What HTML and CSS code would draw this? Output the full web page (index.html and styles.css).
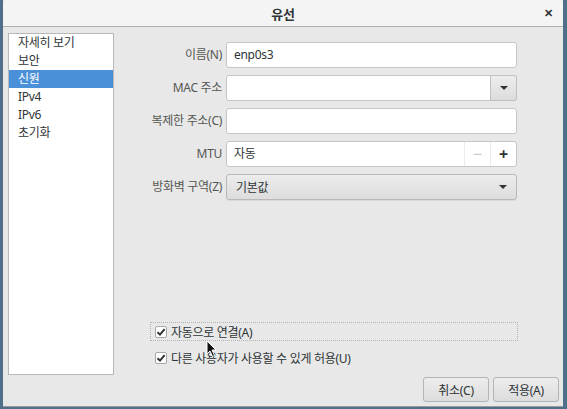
FILE: index.html
```html
<!DOCTYPE html>
<html lang="ko">
<head>
    <meta charset="UTF-8">
    <title>유선</title>
    <link rel="stylesheet" href="styles.css">
</head>
<body>
    <div class="window">
        <div class="titlebar">
            <span class="title">유선</span>
            <span class="close">&#x2715;</span>
        </div>

        <div class="content">
            <!-- page list -->
            <ul class="sidebar">
                <li>자세히 보기</li>
                <li>보안</li>
                <li class="selected">신원</li>
                <li>IPv4</li>
                <li>IPv6</li>
                <li>초기화</li>
            </ul>

            <div class="page">
                <div class="form-grid">
                    <label>이름(N)</label>
                    <div class="entry">enp0s3</div>

                    <label>MAC 주소</label>
                    <div class="entry combo">
                        <span class="entry-text"></span>
                        <span class="combo-btn"><span class="arrow"></span></span>
                    </div>

                    <label>복제한 주소(C)</label>
                    <div class="entry"></div>

                    <label>MTU</label>
                    <div class="entry spin">
                        <span class="entry-text">자동</span>
                        <span class="spin-btn disabled">&minus;</span>
                        <span class="spin-btn">+</span>
                    </div>

                    <label>방화벽 구역(Z)</label>
                    <div class="dropdown">
                        <span>기본값</span>
                        <span class="arrow"></span>
                    </div>
                </div>

                <div class="checks">
                    <div class="check-row focused">
                        <span class="checkbox">
                            <svg width="10" height="10" viewBox="0 0 10 10"><path d="M1.5 5.2 L4 7.6 L8.6 2.2" fill="none" stroke="#2e3436" stroke-width="2"/></svg>
                        </span>
                        자동으로 연결(A)
                    </div>
                    <div class="check-row">
                        <span class="checkbox">
                            <svg width="10" height="10" viewBox="0 0 10 10"><path d="M1.5 5.2 L4 7.6 L8.6 2.2" fill="none" stroke="#2e3436" stroke-width="2"/></svg>
                        </span>
                        다른 사용자가 사용할 수 있게 허용(U)
                    </div>
                    <svg class="cursor" width="12" height="18" viewBox="0 0 12 18">
                        <path d="M1 1 L1 14 L4 11 L6.5 16.5 L8.5 15.5 L6 10 L10 10 Z" fill="#111" stroke="#fff" stroke-width="1"/>
                    </svg>
                </div>
            </div>
        </div>

        <div class="footer">
            <button>취소(C)</button>
            <button>적용(A)</button>
        </div>
    </div>
</body>
</html>
```

FILE: styles.css
```css
body {
    margin: 0;
    width: 567px;
    height: 409px;
    overflow: hidden;
    background: #4f6f8b;
    font-family: "Noto Sans", "Noto Sans CJK KR", sans-serif;
    font-size: 12px;
    letter-spacing: -0.3px;
    color: #2e3436;
}

.window {
    margin-left: 3px;
    width: 560px;
    height: 407px;
    background: #e8e8e8;
    display: flex;
    flex-direction: column;
    box-sizing: border-box;
    border-bottom: 1px solid #9a9a9a;
}

.titlebar {
    height: 26px;
    flex: none;
    background: #f4f4f4;
    border-bottom: 1px solid #b0b0b0;
    border-radius: 4px 4px 0 0;
    display: flex;
    align-items: center;
    justify-content: center;
    position: relative;
}

.title {
    font-weight: bold;
    font-size: 13px;
    color: #2e3436;
}

.close {
    position: absolute;
    right: 10px;
    top: 5px;
    font-size: 11px;
    font-weight: bold;
    color: #2e3436;
}

.content {
    flex: 1;
    display: flex;
    padding: 6px 0 0 5px;
    min-height: 0;
}

.sidebar {
    list-style: none;
    margin: 0;
    padding: 0;
    width: 104px;
    height: 340px;
    background: #fff;
    border: 1px solid #b8b8b8;
    flex: none;
}

.sidebar li {
    height: 18px;
    line-height: 18px;
    padding-left: 9px;
}

.sidebar li.selected {
    background: #4a90d9;
    color: #fff;
}

.page {
    flex: 1;
    display: flex;
    flex-direction: column;
    height: 342px;
    position: relative;
}

.form-grid {
    display: grid;
    grid-template-columns: 108px 291px;
    grid-auto-rows: 26px;
    column-gap: 4px;
    row-gap: 7px;
    padding-top: 9px;
}

.form-grid label {
    text-align: right;
    line-height: 26px;
    color: #555753;
}

.entry {
    background: #fff;
    border: 1px solid #c6c6c6;
    border-radius: 3px;
    box-sizing: border-box;
    line-height: 24px;
    padding-left: 7px;
    display: flex;
}

.entry-text {
    flex: 1;
}

.combo,
.spin {
    padding-right: 0;
}

.combo-btn {
    width: 25px;
    margin: -1px -1px -1px 0;
    border: 1px solid #c0c0c0;
    border-radius: 0 3px 3px 0;
    background: linear-gradient(#ededed, #dcdcdc);
    display: flex;
    align-items: center;
    justify-content: center;
}

.arrow {
    width: 0;
    height: 0;
    border-left: 4px solid transparent;
    border-right: 4px solid transparent;
    border-top: 4px solid #2e3436;
}

.spin-btn {
    width: 25px;
    text-align: center;
    border-left: 1px solid #ececec;
    font-size: 16px;
    font-weight: bold;
    color: #2e3436;
}

.spin-btn.disabled {
    color: #c8c8c8;
    font-weight: normal;
}

.dropdown {
    border: 1px solid #b8b8b8;
    border-radius: 3px;
    background: linear-gradient(#ececec, #dddddd);
    box-sizing: border-box;
    display: flex;
    align-items: center;
    justify-content: space-between;
    padding: 0 9px 0 9px;
    box-shadow: 0 1px 0 rgba(0, 0, 0, 0.06);
}

.checks {
    margin-top: auto;
    margin-left: 36px;
    padding-bottom: 8px;
    display: flex;
    flex-direction: column;
    gap: 7px;
}

.check-row {
    width: 368px;
    height: 19px;
    box-sizing: border-box;
    display: flex;
    align-items: center;
    gap: 4px;
    padding-left: 4px;
    border: 1px dashed transparent;
}

.check-row.focused {
    border-color: #b4b4b4;
    border-style: dotted;
}

.checkbox {
    width: 12px;
    height: 12px;
    box-sizing: border-box;
    border: 1px solid #a8a8a8;
    border-radius: 2px;
    background: #fff;
    display: flex;
    align-items: center;
    justify-content: center;
}

.cursor {
    position: absolute;
    left: 92px;
    top: 307px;
}

.footer {
    flex: none;
    display: flex;
    justify-content: flex-end;
    gap: 4px;
    padding: 2px 4px 4px 0;
}

button {
    width: 66px;
    height: 25px;
    font-family: inherit;
    font-size: 12px;
    letter-spacing: -0.3px;
    color: #2e3436;
    background: linear-gradient(#ededed, #dcdcdc);
    border: 1px solid #b4b4b4;
    border-radius: 3px;
    padding: 0;
}
```
